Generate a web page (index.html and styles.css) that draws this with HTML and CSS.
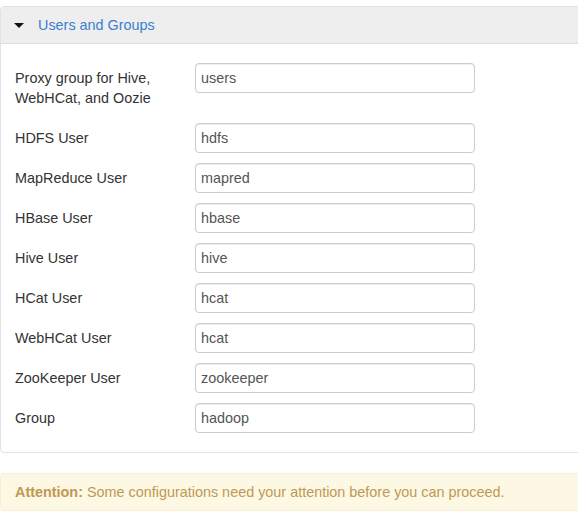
FILE: index.html
```html
<!DOCTYPE html>
<html>
<head>
<meta charset="utf-8">
<link rel="stylesheet" href="styles.css">
</head>
<body>
<div class="panel">
  <div class="panel-head">
    <span class="caret"></span>
    <a class="panel-title" href="#">Users and Groups</a>
  </div>
  <div class="panel-body">
    <div class="row"><label class="lbl">Proxy group for Hive, WebHCat, and Oozie</label><input class="field" type="text" value="users"></div>
    <div class="row"><label class="lbl">HDFS User</label><input class="field" type="text" value="hdfs"></div>
    <div class="row"><label class="lbl">MapReduce User</label><input class="field" type="text" value="mapred"></div>
    <div class="row"><label class="lbl">HBase User</label><input class="field" type="text" value="hbase"></div>
    <div class="row"><label class="lbl">Hive User</label><input class="field" type="text" value="hive"></div>
    <div class="row"><label class="lbl">HCat User</label><input class="field" type="text" value="hcat"></div>
    <div class="row"><label class="lbl">WebHCat User</label><input class="field" type="text" value="hcat"></div>
    <div class="row"><label class="lbl">ZooKeeper User</label><input class="field" type="text" value="zookeeper"></div>
    <div class="row"><label class="lbl">Group</label><input class="field" type="text" value="hadoop"></div>
  </div>
</div>
<div class="alert"><strong>Attention:</strong> Some configurations need your attention before you can proceed.</div>
</body>
</html>
```
FILE: styles.css
```css
html, body {
  overflow: hidden;
}
body {
  margin: 0;
  padding-top: 6px;
  font-family: "Liberation Sans", Arial, sans-serif;
  font-size: 14.4px;
  line-height: 20px;
  color: #333;
  background: #fff;
}
.panel {
  margin-right: -12px;
  border: 1px solid #e2e2e2;
  border-radius: 4px;
}
.panel-head {
  display: flex;
  align-items: center;
  height: 36px;
  padding-left: 13px;
  background: #eeeeee;
  border-bottom: 1px solid #dddddd;
  border-radius: 4px 4px 0 0;
}
.caret {
  width: 0;
  height: 0;
  border-left: 5px solid transparent;
  border-right: 5px solid transparent;
  border-top: 5px solid #111;
  margin-right: 14px;
  margin-top: 1px;
}
.panel-title {
  color: #3b7fd0;
  text-decoration: none;
}
.panel-body {
  padding: 19px 15px 9px 14px;
}
.row {
  display: flex;
  align-items: flex-start;
  margin-bottom: 10px;
}
.lbl {
  width: 180px;
  flex: none;
  padding: 5px 0 5px;
}
.field {
  box-sizing: border-box;
  width: 280px;
  height: 30px;
  padding: 4px 5px;
  font-family: "Liberation Sans", Arial, sans-serif;
  font-size: 14.4px;
  line-height: 20px;
  color: #555;
  border: 1px solid #cccccc;
  border-radius: 4px;
  box-shadow: inset 0 1px 1px rgba(0,0,0,0.075);
  background: #fff;
  margin: 0;
}
.alert {
  margin-top: 20px;
  margin-right: -12px;
  padding: 8px 14px;
  background: #fcf8e3;
  border: 1px solid #fbeed5;
  border-radius: 4px;
  color: #c09853;
}
.alert strong {
  font-weight: bold;
}
```
